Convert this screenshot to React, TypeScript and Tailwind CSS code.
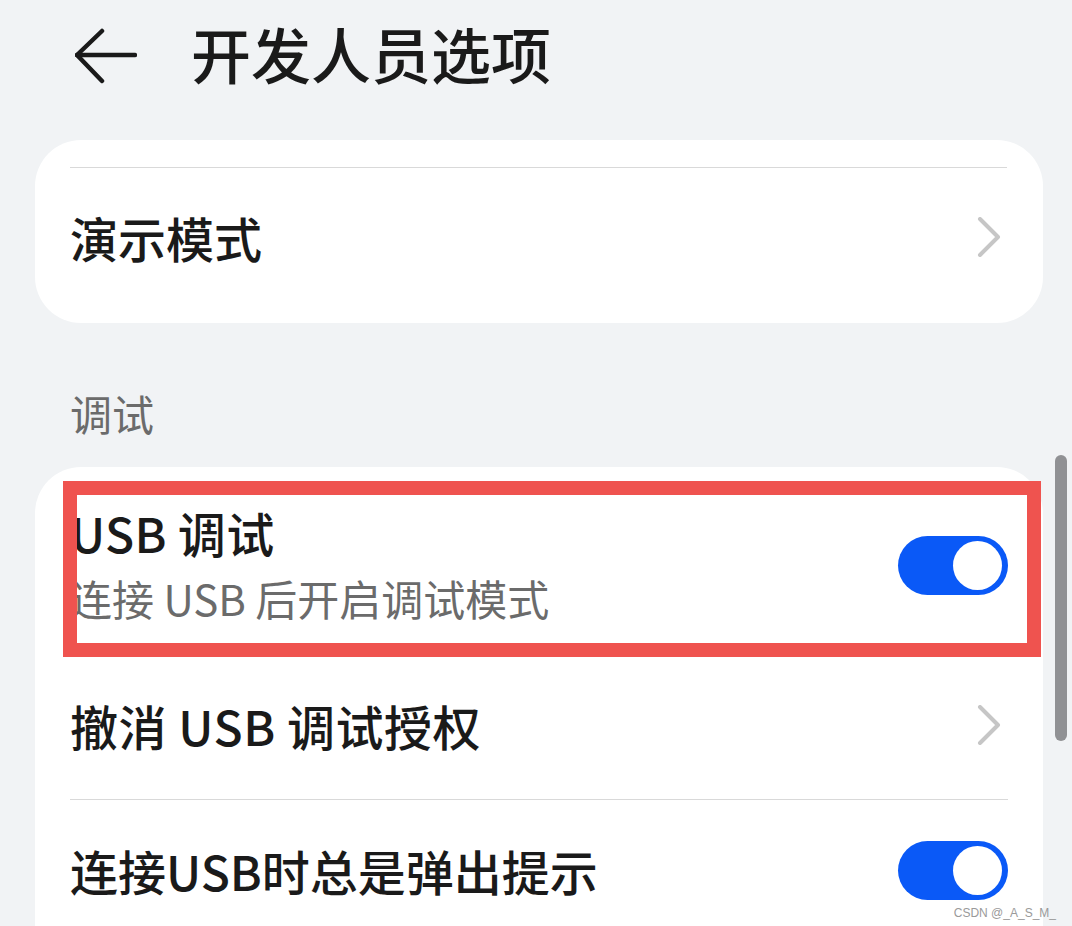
import React from 'react';

const CJK = { fontFamily: '"Noto Sans CJK SC", "Noto Sans", sans-serif' };

const BackArrow = () => (
  <svg width="62" height="56" viewBox="0 0 62 56" fill="none" stroke="#1a1a1a" strokeWidth="4.5" strokeLinecap="round" strokeLinejoin="round">
    <path d="M2 27H60" />
    <path d="M27 3L2 27L27 53" />
  </svg>
);

const Chevron = () => (
  <svg width="24" height="40" viewBox="0 0 24 40" fill="none" stroke="#c6c6c6" strokeWidth="4" strokeLinecap="round" strokeLinejoin="round">
    <path d="M3 2L21 20L3 38" />
  </svg>
);

const Toggle = ({ className = '' }: { className?: string }) => (
  <div className={`flex h-[59px] w-[110px] shrink-0 items-center justify-end rounded-full bg-[#0a59f7] pr-[6px] ${className}`}>
    <div className="h-[49px] w-[49px] rounded-full bg-white" />
  </div>
);

export default function App() {
  return (
    <div className="relative h-[926px] w-[1072px] overflow-hidden bg-[#f1f3f5]" style={CJK}>
      {/* header */}
      <div className="flex h-[106px] items-center pl-[75px]">
        <div className="mt-[6px]">
          <BackArrow />
        </div>
        <h1 className="ml-[54px] text-[60px] font-medium leading-none text-[#1a1a1a]">开发人员选项</h1>
      </div>

      {/* first card */}
      <div className="ml-[35px] mt-[34px] w-[1008px] rounded-[46px] bg-white px-[35px] pb-[11px] pt-[27px]">
        <div className="mr-[1px] border-t border-[#d9d9d9]" />
        <div className="flex h-[144px] items-center justify-between pb-[6px] pr-[7px]">
          <span className="text-[48px] font-medium leading-none text-[#1a1a1a]">演示模式</span>
          <Chevron />
        </div>
      </div>

      {/* section label */}
      <div className="flex h-[144px] items-end pb-[33px] pl-[70px]">
        <span className="text-[42px] leading-[42px] text-[#6b6b6b]">调试</span>
      </div>

      {/* second card */}
      <div className="relative ml-[35px] w-[1008px] rounded-t-[46px] bg-white px-[35px]">
        <div className="flex items-center justify-between pb-[32px] pt-[35px]">
          <div className="flex flex-col">
            <span className="text-[48px] font-medium leading-[60px] tracking-[0.3px] text-[#1a1a1a]">USB 调试</span>
            <span className="mt-[10px] text-[42px] leading-[52px] text-[#6b6b6b]">连接 USB 后开启调试模式</span>
          </div>
          <Toggle className="mt-[4px]" />
        </div>
        <div className="border-t border-[#d9d9d9]" />
        <div className="flex h-[142px] items-center justify-between pb-[6px] pr-[7px]">
          <span className="text-[48px] font-medium leading-none tracking-[0.5px] text-[#1a1a1a]">撤消 USB 调试授权</span>
          <Chevron />
        </div>
        <div className="border-t border-[#d9d9d9]" />
        <div className="flex h-[144px] items-center justify-between pb-[4px]">
          <span className="text-[48px] font-medium leading-none text-[#1a1a1a]">连接USB时总是弹出提示</span>
          <Toggle />
        </div>

        {/* annotation box */}
        <div className="absolute left-[28px] top-[14px] h-[176px] w-[978px] border-[14px] border-[#ef534f]" />
      </div>

      {/* scrollbar */}
      <div className="absolute left-[1055px] top-[455px] h-[286px] w-[12px] rounded-full bg-[#909194]" />

      {/* watermark */}
      <div
        className="absolute bottom-[7px] right-[16px] text-[12px] leading-none text-[#9a9a9a]"
        style={{ fontFamily: '"Liberation Sans", Arial, sans-serif' }}
      >
        CSDN @_A_S_M_
      </div>
    </div>
  );
}
